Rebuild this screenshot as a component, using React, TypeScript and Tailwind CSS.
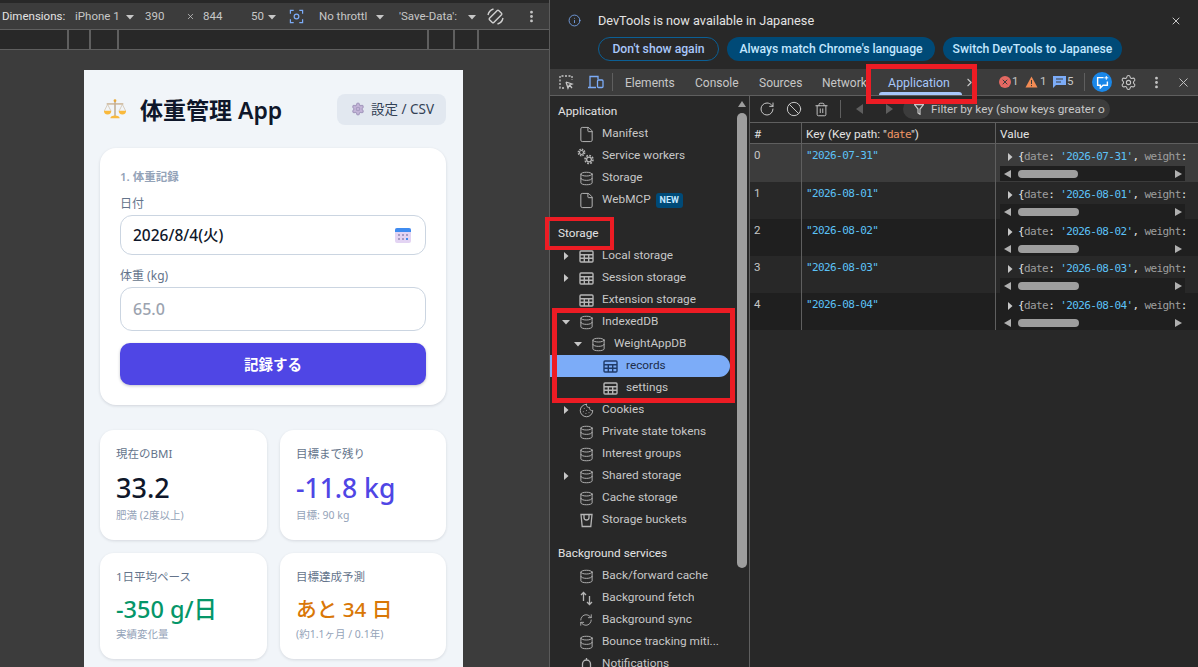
import { Ban, ChevronRight, Cookie, Database, File, Info, MoreVertical, RefreshCw, RotateCw, Settings, Trash2, X } from 'lucide-react';

const Caret = ({ down = false }: { down?: boolean }) => (
  <svg width="8" height="8" viewBox="0 0 8 8" className="shrink-0 text-[#c7c7c7]">
    {down ? <path d="M0 2h8L4 6.500z" fill="currentColor" /> : <path d="M2 0v8l4.500-4z" fill="currentColor" />}
  </svg>
);

const TableIcon = ({ dark = false }: { dark?: boolean }) => (
  <svg width="15" height="13" viewBox="0 0 15 13" fill="none" stroke={dark ? '#1f3a68' : '#b5b5b5'} strokeWidth="1.400" className="shrink-0">
    <rect x="1" y="1" width="13" height="11" rx="1" />
    <path d="M1 4.700h13M1 8.300h13M5.300 4.700V12M9.700 4.700V12" />
  </svg>
);

const Cylinder = () => <Database size={15} strokeWidth={1.500} className="shrink-0 text-[#b5b5b5]" />;
const Doc = () => <File size={17} strokeWidth={1.400} className="-ml-[1px] shrink-0 text-[#b5b5b5]" />;

const Gears = () => (
  <svg width="18" height="17" viewBox="0 0 18 17" fill="none" stroke="#b5b5b5" className="-ml-[2px] shrink-0">
    <circle cx="4.500" cy="4.500" r="2" strokeWidth="1.200" />
    <circle cx="4.500" cy="4.500" r="3.200" strokeWidth="1.400" strokeDasharray="1.500 1" />
    <circle cx="12" cy="11.500" r="2.400" strokeWidth="1.300" />
    <circle cx="12" cy="11.500" r="4" strokeWidth="1.600" strokeDasharray="1.800 1.300" />
  </svg>
);

const Bucket = () => (
  <svg width="15" height="15" viewBox="0 0 15 15" fill="none" stroke="#b5b5b5" strokeWidth="1.300" className="shrink-0">
    <path d="M2 1.500h11l-1.200 12H3.200zM5 1.500v3a2.500 2.500 0 0 0 5 0v-3" />
  </svg>
);

const Fetch = () => (
  <svg width="15" height="15" viewBox="0 0 15 15" fill="none" stroke="#b5b5b5" strokeWidth="1.300" className="shrink-0">
    <path d="M4.500 10V1.500M2 4l2.500-2.500L7 4M10.500 5v8.500M8 11l2.500 2.500L13 11" />
  </svg>
);

const Bell = () => (
  <svg width="15" height="15" viewBox="0 0 15 15" fill="none" stroke="#b5b5b5" strokeWidth="1.300" className="shrink-0">
    <path d="M7.500 1v2M3.500 12V7a4 4 0 0 1 8 0v5z" />
  </svg>
);

type Row = { label: React.ReactNode; icon: React.ReactNode; caret?: 'right' | 'down'; indent?: number; selected?: boolean };

const SideRow = ({ label, icon, caret, indent = 0, selected }: Row) => (
  <div
    className={`flex h-[22px] w-[180px] shrink-0 items-center rounded-r-full ${selected ? 'bg-[#7cacf8] text-[#1c2c4a]' : 'text-[#c7c7c7]'}`}
    style={{ paddingLeft: 12 + indent }}
  >
    <span className="flex w-[17px] shrink-0 items-center">{caret && <Caret down={caret === 'down'} />}</span>
    <span className="flex w-[23px] shrink-0 items-center">{icon}</span>
    <span className="truncate">{label}</span>
  </div>
);

const SectionTitle = ({ children }: { children: string }) => (
  <div className="flex h-[22px] w-[180px] shrink-0 items-center pl-2 text-[#e3e3e3]">{children}</div>
);

const Stat = ({ title, value, valueClass, note, h }: { title: string; value: string; valueClass: string; note: string; h: string }) => (
  <div className={`flex ${h} flex-col rounded-[14px] bg-white pl-4 pt-[15px] shadow-[0_1px_3px_rgba(15,23,42,0.12)]`}>
    <div className="text-[11.500px] leading-[18px] text-[#64748b]">{title}</div>
    <div className={`font-medium ${valueClass}`}>{value}</div>
    <div className="text-[10.500px] leading-[16px] text-[#94a3b8]">{note}</div>
  </div>
);

const records = [
  { n: 0, d: '2026-07-31', bg: 'bg-[#3c3c3c]', h: 'h-[38px]', thumb: 'w-[60px]' },
  { n: 1, d: '2026-08-01', bg: 'bg-[#282828]', h: 'h-[37px]', thumb: 'w-[61px]' },
  { n: 2, d: '2026-08-02', bg: 'bg-[#1f1f1f]', h: 'h-[37px]', thumb: 'w-[61px]' },
  { n: 3, d: '2026-08-03', bg: 'bg-[#282828]', h: 'h-[37px]', thumb: 'w-[61px]' },
  { n: 4, d: '2026-08-04', bg: 'bg-[#1f1f1f]', h: 'h-[37px]', thumb: 'w-[61px]' },
];

const App = () => {
  return (
    <div className="relative flex h-[667px] w-[1198px] overflow-hidden bg-[#3c3c3c] font-['Noto_Sans','Noto_Sans_CJK_JP',sans-serif]">
      {/* device toolbar + phone */}
      <div className="flex w-[550px] shrink-0 flex-col border-r border-[#5a5a5a]">
        <div className="h-[3px] bg-[#282828]" />
        <div className="flex h-[27px] items-center border-b border-[#5f5f5f] pt-[1px] text-[11.500px] text-[#c7c7c7] font-['Roboto',sans-serif]">
          <span className="ml-[2px] w-[73px] text-[#e3e3e3]">Dimensions:</span>
          <span className="w-[50px]">iPhone 1</span>
          <span className="ml-[1px]"><Caret down /></span>
          <span className="ml-[11px] w-[41px]">390</span>
          <X size={9} className="mr-[8px]" />
          <span className="w-[48px]">844</span>
          <span className="w-[13px]">50</span>
          <span className="ml-[4px]"><Caret down /></span>
          <svg width="15" height="15" viewBox="0 0 16 16" fill="none" stroke="#7cacf8" strokeWidth="1.300" className="ml-[13px]">
            <path d="M1.500 5V1.500H5M11 1.500h3.500V5M14.500 11v3.500H11M5 14.500H1.500V11" />
            <circle cx="8" cy="8" r="2.500" />
          </svg>
          <span className="ml-[15px] w-[51px] truncate">No throttl</span>
          <span className="ml-[6px]"><Caret down /></span>
          <span className="ml-[15px] w-[62px] truncate">'Save-Data':</span>
          <span className="ml-[7px]"><Caret down /></span>
          <svg width="17" height="17" viewBox="0 0 17 17" fill="none" stroke="#d0d0d0" strokeWidth="1.400" className="ml-[11px]">
            <rect x="5.500" y="2" width="6" height="13" rx="1" transform="rotate(45 8.500 8.500)" />
            <path d="M1 7a8 8 0 0 1 5.500-6M16 10a8 8 0 0 1-5.500 6" />
          </svg>
          <MoreVertical size={15} strokeWidth={2.500} className="ml-[20px] text-[#c7c7c7]" />
        </div>
        <div className="flex h-[20px] items-stretch border-b border-[#5f5f5f] bg-[#282828]">
          <div className="ml-[67px] w-[24px] border-x-2 border-[#5f5f5f]" />
          <div className="w-[28px] border-r-2 border-[#5f5f5f]" />
          <div className="ml-[308px] w-[28px] border-x-2 border-[#5f5f5f]" />
          <div className="w-[24px] border-r-2 border-[#5f5f5f]" />
        </div>

        <div className="mt-5 ml-[84px] flex w-[379px] flex-1 flex-col overflow-hidden bg-[#f1f5f9] pr-[17px] pl-4 text-[#0f172a]">
          <div className="mt-[23px] flex h-[32px] shrink-0 items-center">
            <svg width="24" height="24" viewBox="0 0 26 24" className="ml-[3px] shrink-0">
              <path d="M13 3v17" stroke="#b9a48a" strokeWidth="1.500" />
              <path d="M4 6.500h18" stroke="#c9b08f" strokeWidth="1.500" />
              <path d="M5 7l-3.500 7M5 7l3.500 7M21 7l-3.500 7M21 7l3.500 7" stroke="#d0bfa8" strokeWidth="0.800" fill="none" />
              <path d="M1 14h8a4 4 0 0 1-8 0zM17 14h8a4 4 0 0 1-8 0z" fill="#f9b93c" />
              <path d="M8 22c0-2 2-3 5-3s5 1 5 3z" fill="#f9b93c" />
              <circle cx="13" cy="3" r="1.500" fill="#e8a838" />
            </svg>
            <h1 className="mt-[2px] ml-[13px] text-[23px] leading-8 font-semibold">体重管理 App</h1>
            <div className="ml-auto flex h-[31px] w-[109px] items-center rounded-[8px] bg-[#e2e8f0] pl-[14px] text-[13.500px] text-[#334155]">
              <Settings size={14} fill="#c4b5d8" stroke="#a79cc0" className="mr-[6px] shrink-0" />
              設定 / CSV
            </div>
          </div>

          <div className="mt-[23px] h-[257px] shrink-0 rounded-[16px] bg-white px-5 pt-[20px] shadow-[0_1px_3px_rgba(15,23,42,0.14)]">
            <div className="text-[11.500px] leading-[18px] font-semibold text-[#94a3b8]">1. 体重記録</div>
            <div className="mt-[9px] text-[12px] leading-[18px] text-[#64748b]">日付</div>
            <div className="mt-[2px] flex h-[40px] items-center justify-between rounded-[12px] border border-[#cbd5e1] pt-[2px] pr-[14px] pl-3 text-[15.500px] font-medium text-[#0f172a]">
              2026/8/4(火)
              <svg width="16" height="15" viewBox="0 0 16 15" className="-mt-[2px]">
                <rect x="0" y="0" width="16" height="15" rx="2" fill="#e3d4f3" />
                <path d="M0 4V2a2 2 0 0 1 2-2h12a2 2 0 0 1 2 2v2z" fill="#3f8cf0" />
                <g fill="#a79bc4">
                  <rect x="3" y="6" width="2" height="2" /><rect x="7" y="6" width="2" height="2" /><rect x="11" y="6" width="2" height="2" />
                  <rect x="3" y="10" width="2" height="2" /><rect x="7" y="10" width="2" height="2" /><rect x="11" y="10" width="2" height="2" fill="#3f8cf0" />
                </g>
              </svg>
            </div>
            <div className="mt-[12px] text-[12px] leading-[18px] text-[#64748b]">体重 (kg)</div>
            <div className="mt-[2px] flex h-[44px] items-center rounded-[12px] border border-[#cbd5e1] pl-3 text-[16px] font-medium text-[#9ca3af]">65.0</div>
            <div className="mt-3 flex h-[42px] items-center justify-center rounded-[10px] bg-[#4f46e5] pt-[1px] text-[14.500px] font-bold text-white shadow-[0_1px_3px_rgba(15,23,42,0.25)]">記録する</div>
          </div>

          <div className="mt-[25px] grid shrink-0 grid-cols-[167px_166px] gap-x-[13px] gap-y-[13px]">
            <Stat h="h-[110px]" title="現在のBMI" value="33.2" valueClass="mt-[6px] text-[27px] leading-[38px] text-[#0f172a]" note="肥満 (2度以上)" />
            <Stat h="h-[110px]" title="目標まで残り" value="-11.8 kg" valueClass="mt-[6px] text-[26.500px] leading-[38px] text-[#4f46e5]" note="目標: 90 kg" />
            <Stat h="h-[106px]" title="1日平均ペース" value="-350 g/日" valueClass="mt-[6px] text-[23.500px] leading-[34px] text-[#059669]" note="実績変化量" />
            <Stat h="h-[106px]" title="目標達成予測" value="あと 34 日" valueClass="mt-[6px] text-[20.700px] leading-[34px] text-[#d97706]" note="(約1.1ヶ月 / 0.1年)" />
          </div>
        </div>
      </div>

      {/* devtools */}
      <div className="flex min-w-0 flex-1 flex-col bg-[#282828] text-[11.800px] font-['Roboto',sans-serif] text-[#c7c7c7]">
        <div className="relative h-[69px] shrink-0">
          <div className="flex h-[37px] items-center pt-[4px] pl-[18px] text-[12.700px] text-[#e3e3e3]">
            <Info size={13} strokeWidth={1.500} className="mr-[17px] text-[#7cacf8]" />
            DevTools is now available in Japanese
            <X size={12} className="mr-[16px] ml-auto text-[#c7c7c7]" />
          </div>
          <div className="ml-[48px] flex gap-2 text-[12.200px] font-medium">
            <div className="flex h-[24px] w-[121px] items-center justify-center rounded-full border border-[#0b5f95] text-[#a8c7fa]">Don't show again</div>
            <div className="flex h-[24px] w-[208px] items-center justify-center rounded-full bg-[#004a77] text-[#c2e7ff]">Always match Chrome's language</div>
            <div className="flex h-[24px] w-[179px] items-center justify-center rounded-full bg-[#004a77] text-[#c2e7ff]">Switch DevTools to Japanese</div>
          </div>
        </div>

        <div className="flex h-[27px] shrink-0 items-center border-b border-[#5f5f5f] bg-[#3c3c3c]">
          <svg width="16" height="16" viewBox="0 0 16 16" fill="none" stroke="#c7c7c7" strokeWidth="1.300" className="ml-[8px] shrink-0">
            <path d="M6 14H2V2h12v4" strokeDasharray="2 1.500" />
            <path d="M8 8l6 2-2.500 1L14 14M8 8l2 6 1-2.500" />
          </svg>
          <svg width="17" height="14" viewBox="0 0 17 14" fill="none" stroke="#7cacf8" strokeWidth="1.300" className="ml-[13px] shrink-0">
            <path d="M1 12.500h8M3 12.500V1.500h8v3" />
            <rect x="10.500" y="5" width="5.500" height="7.500" rx="1" />
          </svg>
          <div className="ml-[8px] h-[18px] w-px bg-[#5f5f5f]" />
          <span className="mt-[2px] ml-[12px] w-[70px] text-[12px]">Elements</span>
          <span className="mt-[2px] w-[64px] text-[12px]">Console</span>
          <span className="mt-[2px] w-[63px] text-[12px]">Sources</span>
          <span className="mt-[2px] w-[50px] overflow-hidden text-[12px]">Network</span>
          <div className="relative flex h-[26px] w-[94px] items-center justify-center pt-[2px] text-[12.300px] text-[#a8c7fa]">
            Application
            <div className="absolute bottom-0 left-[7px] h-[3px] w-[83px] rounded-t-[3px] bg-[#a8c7fa]" />
          </div>
          <ChevronRight size={13} className="-ml-[3px] shrink-0 text-[#c7c7c7]" />
          <div className="ml-[23px] flex h-[12px] w-[12px] shrink-0 items-center justify-center rounded-full bg-[#e46962] text-[#3c3c3c]"><X size={8} strokeWidth={3} /></div>
          <span className="ml-[1px] w-[6px] text-[11.500px]">1</span>
          <svg width="13" height="12" viewBox="0 0 13 12" className="ml-[7px] shrink-0"><path d="M6.500 0.500 12.500 11.500H.5z" fill="#f28b54" /><path d="M6.500 4v4M6.500 9v1.200" stroke="#3c3c3c" /></svg>
          <span className="ml-[2px] w-[6px] text-[11.500px]">1</span>
          <svg width="13" height="12" viewBox="0 0 13 12" className="ml-[7px] shrink-0"><path d="M0 0h13v9H3L0 12z" fill="#7cacf8" /><path d="M3 3h7M3 6h5" stroke="#3c3c3c" /></svg>
          <span className="ml-[1px] w-[6px] text-[11.500px]">5</span>
          <div className="ml-[11px] h-[18px] w-px shrink-0 bg-[#5f5f5f]" />
          <div className="ml-[7px] flex h-[20px] w-[20px] shrink-0 items-center justify-center rounded-full bg-[#1a87e8]">
            <svg width="13" height="13" viewBox="0 0 12 12" fill="none" stroke="#fff" strokeWidth="1.300"><path d="M7 1.500H1.500v7H4V11l2.500-2.500h4V5" /><path d="M9.500 0v3.500M7.800 1.700h3.500" strokeWidth="0.900" /></svg>
          </div>
          <Settings size={17} strokeWidth={1.500} className="ml-[8px] shrink-0 text-[#c7c7c7]" />
          <MoreVertical size={15} strokeWidth={2.500} className="ml-[12px] shrink-0" />
          <X size={15} strokeWidth={1.500} className="ml-[12px] shrink-0" />
        </div>

        <div className="flex min-h-0 flex-1">
          <div className="relative flex w-[200px] shrink-0 flex-col overflow-hidden border-r border-[#5f5f5f] pt-[5px]">
            <SectionTitle>Application</SectionTitle>
            <SideRow label="Manifest" icon={<Doc />} />
            <SideRow label="Service workers" icon={<Gears />} />
            <SideRow label="Storage" icon={<Cylinder />} />
            <SideRow
              label={<span className="flex items-center gap-[5px]">WebMCP<span className="rounded-[3px] bg-[#004a77] px-[4px] text-[9px] leading-[15px] font-bold text-[#c2e7ff]">NEW</span></span>}
              icon={<Doc />}
            />
            <div className="h-3 shrink-0" />
            <SectionTitle>Storage</SectionTitle>
            <SideRow label="Local storage" icon={<TableIcon />} caret="right" />
            <SideRow label="Session storage" icon={<TableIcon />} caret="right" />
            <SideRow label="Extension storage" icon={<TableIcon />} />
            <SideRow label="IndexedDB" icon={<Cylinder />} caret="down" />
            <SideRow label="WeightAppDB" icon={<Cylinder />} caret="down" indent={12} />
            <SideRow label="records" icon={<TableIcon dark />} indent={24} selected />
            <SideRow label="settings" icon={<TableIcon />} indent={24} />
            <SideRow label="Cookies" icon={<Cookie size={15} strokeWidth={1.500} className="text-[#b5b5b5]" />} caret="right" />
            <SideRow label="Private state tokens" icon={<Cylinder />} />
            <SideRow label="Interest groups" icon={<Cylinder />} />
            <SideRow label="Shared storage" icon={<Cylinder />} caret="right" />
            <SideRow label="Cache storage" icon={<Cylinder />} />
            <SideRow label="Storage buckets" icon={<Bucket />} />
            <div className="h-3 shrink-0" />
            <SectionTitle>Background services</SectionTitle>
            <SideRow label="Back/forward cache" icon={<Cylinder />} />
            <SideRow label="Background fetch" icon={<Fetch />} />
            <SideRow label="Background sync" icon={<RefreshCw size={14} strokeWidth={1.500} className="text-[#b5b5b5]" />} />
            <SideRow label="Bounce tracking miti..." icon={<Cylinder />} />
            <SideRow label="Notifications" icon={<Bell />} />
            {/* scrollbar */}
            <div className="absolute top-[5px] right-[2px] flex w-[10px] flex-col items-center">
              <div className="h-0 w-0 border-x-[4px] border-b-[6px] border-x-transparent border-b-[#9e9e9e]" />
              <div className="mt-[6px] h-[455px] w-[10px] rounded-full bg-[#9e9e9e]" />
            </div>
          </div>

          <div className="flex min-w-0 flex-1 flex-col">
            <div className="flex h-[27px] shrink-0 items-center border-b border-[#5f5f5f]">
              <RotateCw size={16} strokeWidth={1.500} className="ml-[9px]" />
              <Ban size={16} strokeWidth={1.500} className="ml-[11px]" />
              <Trash2 size={15} strokeWidth={1.500} className="ml-[12px]" />
              <div className="ml-[11px] h-[18px] w-px bg-[#5f5f5f]" />
              <div className="ml-[15px] h-0 w-0 border-y-[5px] border-r-[7px] border-y-transparent border-r-[#5e5e5e]" />
              <div className="ml-[23px] h-0 w-0 border-y-[5px] border-l-[7px] border-y-transparent border-l-[#5e5e5e]" />
              <div className="ml-[10px] flex h-[20px] w-[207px] items-center overflow-hidden rounded-full bg-[#3c3c3c] pl-[11px] whitespace-nowrap">
                <svg width="10" height="11" viewBox="0 0 10 11" fill="none" stroke="#c7c7c7" strokeWidth="1.200" className="mr-[7px] shrink-0"><path d="M.5.700h9L6 5v5.300L4 9V5z" /></svg>
                <span className="mt-[2px]">Filter by key (show keys greater o</span>
              </div>
            </div>
            <div className="grid h-[21px] shrink-0 grid-cols-[52px_194px_1fr] border-b border-[#5f5f5f] bg-[#282828] text-[#e3e3e3]">
              <div className="flex items-center border-r border-[#5f5f5f] pt-[2px] pl-[4px]">#</div>
              <div className="border-r border-[#5f5f5f] pt-[2px] pl-[4px] leading-[18px]">Key (Key path: "<span className="font-['DejaVu_Sans_Mono',monospace] text-[11px] tracking-[-0.6px] text-[#f29766]">date</span>")</div>
              <div className="flex items-center pt-[2px] pl-[4px]">Value</div>
            </div>
            {records.map((r) => (
              <div key={r.n} className={`grid ${r.h} shrink-0 grid-cols-[52px_194px_1fr] ${r.bg}`}>
                <div className="border-r border-[#5f5f5f] pt-[2px] pl-[4px] text-[11.500px] leading-[18px]">{r.n}</div>
                <div className="border-r border-[#5f5f5f] pt-[3px] pl-[4px] font-['DejaVu_Sans_Mono',monospace] text-[11px] leading-[18px] tracking-[-0.6px] text-[#5cc2f7]">"{r.d}"</div>
                <div className="overflow-hidden pl-[4px]">
                  <div className="flex h-[22px] w-[190px] items-center pt-[4px] font-['DejaVu_Sans_Mono',monospace] text-[11px] tracking-[-0.6px] whitespace-pre">
                    <span className="mr-[4px] ml-[6px]"><Caret /></span>
                    <span className="text-[#e3e3e3]">
                      {'{'}<span className="text-[#9e9e9e]">date</span>: <span className="text-[#5cc2f7]">'{r.d}'</span>, <span className="text-[#9e9e9e]">weight</span>:
                    </span>
                  </div>
                  <div className="flex h-[15px] w-[185px] items-center bg-[#1f1f1f] pl-[4px]">
                    <div className="h-0 w-0 border-y-[4px] border-r-[7px] border-y-transparent border-r-[#b0b0b0]" />
                    <div className={`ml-[7px] h-[8px] ${r.thumb} rounded-full bg-[#9e9e9e]`} />
                    <div className="mr-[3px] ml-auto h-0 w-0 border-y-[4px] border-l-[7px] border-y-transparent border-l-[#b0b0b0]" />
                  </div>
                </div>
              </div>
            ))}
          </div>
        </div>
      </div>

      {/* red annotation boxes */}
      <div className="absolute top-[64px] left-[866px] h-[40px] w-[111px] border-[5px] border-[#ed1c24]" />
      <div className="absolute top-[217px] left-[545px] h-[33px] w-[69px] border-[4px] border-[#ed1c24]" />
      <div className="absolute top-[308px] left-[552px] h-[95px] w-[183px] border-[5px] border-[#ed1c24]" />
    </div>
  );
};

export default App;
